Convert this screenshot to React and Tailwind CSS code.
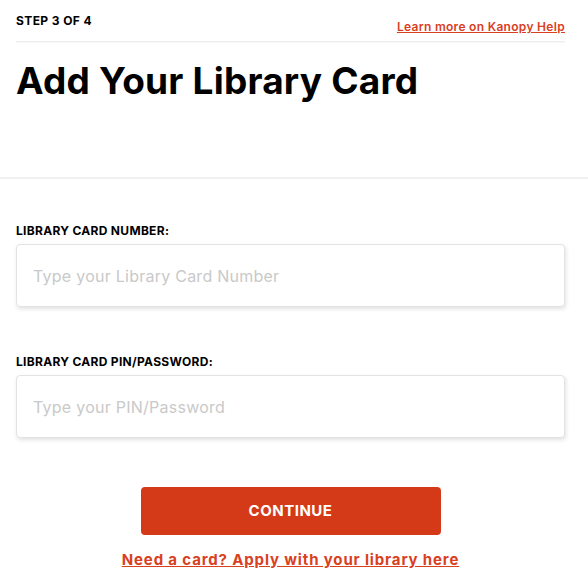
import React, { useState } from 'react';

const Field = ({ label, placeholder, type = 'text', value, onChange }) => (
  <div className="flex flex-col">
    <label className="text-[12px] font-bold uppercase tracking-[0.3px] text-black leading-none mb-[7px]">{label}</label>
    <input
      type={type}
      value={value}
      onChange={onChange}
      placeholder={placeholder}
      className="h-[63px] w-full rounded-[4px] border border-[#e3e3e3] bg-white px-[16px] text-[16px] tracking-[0.25px] text-[#333] shadow-[1px_2px_4px_rgba(0,0,0,0.12)] outline-none placeholder:text-[#c9c9c9]"
    />
  </div>
);

export default function App() {
  const [cardNumber, setCardNumber] = useState('');
  const [pin, setPin] = useState('');

  return (
    <div className="min-h-screen bg-white font-['Inter',sans-serif] text-black">
      {/* header */}
      <div className="pl-[16px] pr-[23px] pt-[15px]">
        <div className="flex items-end justify-between pb-[8px] border-b border-[#eeeeee] shadow-[0_1px_1px_rgba(0,0,0,0.03)]">
          <span className="text-[12px] font-bold tracking-[0.4px] leading-none mb-[6px]">STEP 3 OF 4</span>
          <a href="#" className="text-[12px] font-semibold tracking-[0.3px] text-[#d9401f] underline leading-none">
            Learn more on Kanopy Help
          </a>
        </div>
        <h1 className="mt-[20px] text-[37px] font-bold leading-none tracking-[0.2px] pb-[78px]">
          Add Your Library Card
        </h1>
      </div>
      <div className="h-[2px] bg-[#f1f1f1]" />

      {/* form */}
      <form className="pl-[16px] pr-[23px] pt-[46px] flex flex-col" onSubmit={e => e.preventDefault()}>
        <Field
          label="Library Card Number:"
          placeholder="Type your Library Card Number"
          value={cardNumber}
          onChange={e => setCardNumber(e.target.value)}
        />
        <div className="h-[49px]" />
        <Field
          label="Library Card PIN/Password:"
          placeholder="Type your PIN/Password"
          type="password"
          value={pin}
          onChange={e => setPin(e.target.value)}
        />
        <div className="flex flex-col items-center mt-[49px]">
          <button
            type="submit"
            className="h-[48px] w-[300px] rounded-[4px] bg-[#d43a17] text-[15px] font-bold tracking-[0.5px] text-white"
          >
            CONTINUE
          </button>
          <a href="#" className="mt-[14px] text-[15px] font-bold tracking-[0.85px] text-[#d9401f] underline">
            Need a card? Apply with your library here
          </a>
        </div>
      </form>
    </div>
  );
}
